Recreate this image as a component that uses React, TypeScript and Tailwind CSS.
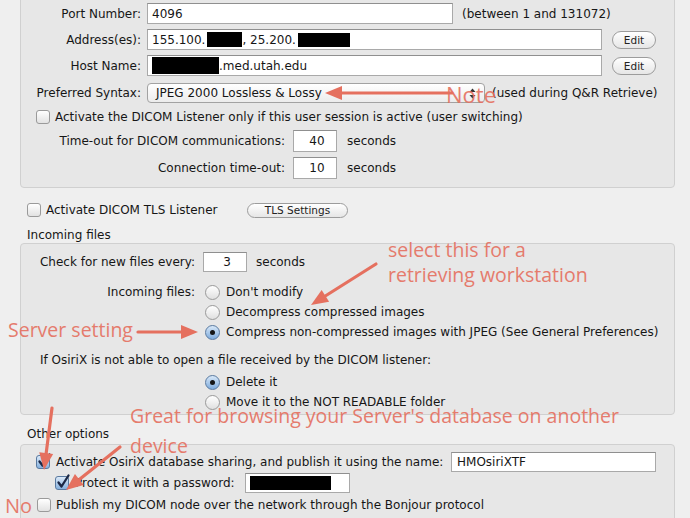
import React from "react";

const RED = "#e5705f";

function Checkbox({ checked }: { checked?: boolean }) {
  return (
    <span
      className={
        "relative inline-block h-[14px] w-[14px] shrink-0 rounded-[3px] border " +
        (checked
          ? "border-[#5a7aa0] bg-gradient-to-b from-[#dbe9f8] to-[#86b1de]"
          : "border-[#9a9a9a] bg-gradient-to-b from-white to-[#e2e2e2]")
      }
    >
      {checked && (
        <svg className="absolute left-[0px] top-[-3px] overflow-visible" width="16" height="16" viewBox="0 0 16 16">
          <path d="M2.5 8.5 L5.5 12.5 L12.5 1.5" fill="none" stroke="#1b2745" strokeWidth="2.3" strokeLinecap="round" strokeLinejoin="round" />
        </svg>
      )}
    </span>
  );
}

function Radio({ selected }: { selected?: boolean }) {
  return (
    <span
      className={
        "relative inline-flex h-[15px] w-[15px] shrink-0 items-center justify-center rounded-full border " +
        (selected
          ? "border-[#5a7aa0] bg-gradient-to-b from-[#d8e8f8] to-[#7eabdc]"
          : "border-[#9a9a9a] bg-gradient-to-b from-white to-[#e0e0e0]")
      }
    >
      {selected && <span className="h-[5px] w-[5px] rounded-full bg-[#151515]" />}
    </span>
  );
}

function Field({ className, children }: { className?: string; children?: React.ReactNode }) {
  return (
    <div
      className={
        "flex items-center overflow-hidden border border-[#a9a9a9] border-t-[#8f8f8f] bg-white pl-[4px] whitespace-nowrap " +
        (className ?? "")
      }
    >
      {children}
    </div>
  );
}

function PillButton({ className, children }: { className?: string; children: React.ReactNode }) {
  return (
    <div
      className={
        "flex items-center justify-center rounded-full border border-[#9c9c9c] bg-gradient-to-b from-white to-[#e6e6e6] text-[10.5px] text-[#222] " +
        (className ?? "")
      }
    >
      {children}
    </div>
  );
}

function Black({ className }: { className: string }) {
  return <span className={"inline-block bg-black " + className} />;
}

function head(x1: number, y1: number, x2: number, y2: number) {
  const dx = x2 - x1;
  const dy = y2 - y1;
  const len = Math.sqrt(dx * dx + dy * dy);
  const ux = dx / len;
  const uy = dy / len;
  const L = 17;
  const W = 7;
  const bx = x2 - ux * L;
  const by = y2 - uy * L;
  const px = -uy;
  const py = ux;
  return {
    pts: `${x2},${y2} ${bx + px * W},${by + py * W} ${bx - px * W},${by - py * W}`,
    lx: x2 - ux * (L - 2),
    ly: y2 - uy * (L - 2),
  };
}

function Arrow({ x1, y1, x2, y2 }: { x1: number; y1: number; x2: number; y2: number }) {
  const h = head(x1, y1, x2, y2);
  return (
    <g>
      <line x1={x1} y1={y1} x2={h.lx} y2={h.ly} stroke={RED} strokeWidth="3.2" strokeLinecap="round" />
      <polygon points={h.pts} fill={RED} />
    </g>
  );
}

export default function App() {
  return (
    <div
      className="relative h-[518px] w-[690px] overflow-hidden bg-[#efefef] text-[12px] leading-[14px] text-[#161616]"
      style={{ fontFamily: '"Lucida Grande", "DejaVu Sans", sans-serif' }}
    >
      <div className="ml-[20px] w-[655px]">
        {/* Group 1 */}
        <div className="-mt-[5px] rounded-[4px] border border-[#d0d0d0] bg-[#e7e7e7] pb-[8px] pt-[7px]">
          <div className="flex h-[21px] items-center">
            <span className="w-[120px] text-right">Port Number:</span>
            <Field className="ml-[6px] h-[21px] w-[306px]">4096</Field>
            <span className="ml-[9px]">(between 1 and 131072)</span>
          </div>
          <div className="mt-[5px] flex h-[21px] items-center">
            <span className="w-[120px] text-right">Address(es):</span>
            <Field className="ml-[6px] h-[21px] w-[455px]">
              <span>155.100.</span>
              <Black className="ml-[2px] h-[15px] w-[35px]" />
              <span>, 25.200.</span>
              <Black className="ml-[2px] h-[14px] w-[52px]" />
            </Field>
            <PillButton className="ml-[10px] h-[18px] w-[44px]">Edit</PillButton>
          </div>
          <div className="mt-[5px] flex h-[21px] items-center">
            <span className="w-[120px] text-right">Host Name:</span>
            <Field className="ml-[6px] h-[21px] w-[455px]">
              <Black className="h-[17px] w-[67px]" />
              <span>.med.utah.edu</span>
            </Field>
            <PillButton className="ml-[10px] h-[18px] w-[44px]">Edit</PillButton>
          </div>
          <div className="mt-[7px] flex h-[20px] items-center">
            <span className="w-[120px] text-right">Preferred Syntax:</span>
            <div className="relative ml-[6px] flex h-[20px] w-[338px] items-center rounded-[4px] border border-[#a2a2a2] bg-gradient-to-b from-white to-[#ececec] pl-[8px]">
              JPEG 2000 Lossless &amp; Lossy
              <svg className="absolute right-[8px] top-[4px]" width="7" height="11" viewBox="0 0 7 11">
                <path d="M0.5 4 L3.5 0.5 L6.5 4 Z M0.5 7 L3.5 10.5 L6.5 7 Z" fill="#333" />
              </svg>
            </div>
            <span className="ml-[7px]">(used during Q&amp;R Retrieve)</span>
          </div>
          <div className="mt-[6px] flex h-[16px] items-center pl-[15px]">
            <Checkbox />
            <span className="ml-[5px]">Activate the DICOM Listener only if this user session is active (user switching)</span>
          </div>
          <div className="mt-[5px] flex h-[22px] items-center">
            <span className="w-[264px] text-right">Time-out for DICOM communications:</span>
            <Field className="ml-[8px] h-[22px] w-[44px] justify-center pl-0">40</Field>
            <span className="ml-[10px]">seconds</span>
          </div>
          <div className="mt-[5px] flex h-[22px] items-center">
            <span className="w-[264px] text-right">Connection time-out:</span>
            <Field className="ml-[8px] h-[22px] w-[44px] justify-center pl-0">10</Field>
            <span className="ml-[10px]">seconds</span>
          </div>
        </div>

        {/* TLS */}
        <div className="mt-[14px] flex h-[16px] items-center pl-[7px]">
          <div className="flex w-[220px] items-center">
            <Checkbox />
            <span className="ml-[5px]">Activate DICOM TLS Listener</span>
          </div>
          <PillButton className="h-[15px] w-[101px]">TLS Settings</PillButton>
        </div>

        <div className="mt-[10px] h-[14px] pl-[7px]">Incoming files</div>

        {/* Incoming files group */}
        <div className="mt-[1px] rounded-[4px] border border-[#d0d0d0] bg-[#e7e7e7] pb-[2px] pt-[8px]">
          <div className="flex h-[20px] items-center">
            <span className="w-[174px] text-right">Check for new files every:</span>
            <Field className="ml-[8px] h-[20px] w-[44px] justify-center pl-0">3</Field>
            <span className="ml-[9px]">seconds</span>
          </div>
          <div className="mt-[10px] flex h-[20px] items-center">
            <span className="w-[174px] text-right">Incoming files:</span>
            <span className="ml-[10px] flex items-center">
              <Radio />
              <span className="ml-[6px]">Don't modify</span>
            </span>
          </div>
          <div className="flex h-[20px] items-center pl-[184px]">
            <Radio />
            <span className="ml-[6px]">Decompress compressed images</span>
          </div>
          <div className="flex h-[20px] items-center pl-[184px]">
            <Radio selected />
            <span className="ml-[6px]">Compress non-compressed images with JPEG (See General Preferences)</span>
          </div>
          <div className="mt-[11px] h-[14px] pl-[19px]">
            If OsiriX is not able to open a file received by the DICOM listener:
          </div>
          <div className="mt-[5px] flex h-[20px] items-center pl-[184px]">
            <Radio selected />
            <span className="ml-[6px]">Delete it</span>
          </div>
          <div className="flex h-[20px] items-center pl-[184px]">
            <Radio />
            <span className="ml-[6px]">Move it to the NOT READABLE folder</span>
          </div>
        </div>

        <div className="mt-[12px] h-[14px] pl-[7px]">Other options</div>

        {/* Other options group */}
        <div className="mt-[3px] h-[120px] rounded-[4px] border border-[#d0d0d0] bg-[#e7e7e7] pt-[7px]">
          <div className="flex h-[20px] items-center pl-[15px]">
            <Checkbox checked />
            <span className="ml-[6px] w-[389px] whitespace-nowrap">
              Activate OsiriX database sharing, and publish it using the name:
            </span>
            <Field className="ml-[6px] h-[20px] w-[205px] pl-[5px]">HMOsiriXTF</Field>
          </div>
          <div className="mt-[1px] flex h-[20px] items-center pl-[34px]">
            <Checkbox checked />
            <span className="ml-[6px] w-[164px] whitespace-nowrap">Protect it with a password:</span>
            <Field className="ml-[6px] h-[20px] w-[105px] pl-[2px]">
              <Black className="h-[14px] w-[81px]" />
            </Field>
          </div>
          <div className="mt-[2px] flex h-[20px] items-center pl-[16px]">
            <Checkbox />
            <span className="ml-[5px]">Publish my DICOM node over the network through the Bonjour protocol</span>
          </div>
        </div>
      </div>

      {/* Annotations overlay */}
      <div
        className="pointer-events-none absolute inset-0 leading-none"
        style={{ fontFamily: '"Open Sans", "Liberation Sans", sans-serif', color: RED }}
      >
        <svg className="absolute inset-0" width="690" height="518">
          <Arrow x1={452} y1={93} x2={325} y2={93} />
          <Arrow x1={376} y1={264} x2={311} y2={305} />
          <Arrow x1={138} y1={332} x2={198} y2={332} />
          <Arrow x1={52} y1={408} x2={44} y2={470} />
          <Arrow x1={120} y1={447} x2={66} y2={490} />
        </svg>
        <span className="absolute left-[446px] top-[83px] text-[22px] opacity-90">Note</span>
        <span className="absolute left-[388px] top-[240px] text-[19.5px] opacity-90">select this for a</span>
        <span className="absolute left-[388px] top-[265px] text-[19.5px] opacity-90">retrieving workstation</span>
        <span className="absolute left-[8px] top-[320px] text-[19.5px] opacity-90">Server setting</span>
        <span className="absolute left-[130px] top-[406px] text-[19.5px] opacity-90">
          Great for browsing your Server's database on another
        </span>
        <span className="absolute left-[130px] top-[436px] text-[19.5px] opacity-90">device</span>
        <span className="absolute left-[5px] top-[496px] text-[20px] opacity-90">No</span>
      </div>
    </div>
  );
}
